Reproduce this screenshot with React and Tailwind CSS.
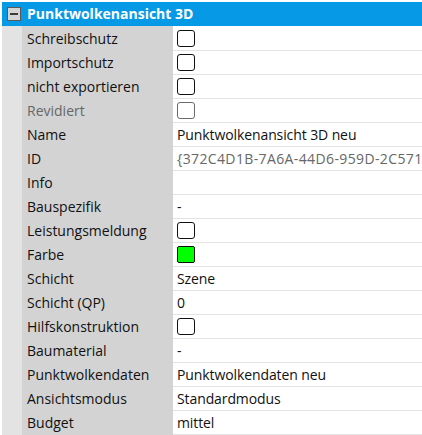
import React from "react";

const rows = [
  { label: "Schreibschutz", type: "check" },
  { label: "Importschutz", type: "check" },
  { label: "nicht exportieren", type: "check" },
  { label: "Revidiert", type: "check", muted: true },
  { label: "Name", value: "Punktwolkenansicht 3D neu" },
  { label: "ID", value: "{372C4D1B-7A6A-44D6-959D-2C571", grayValue: true },
  { label: "Info", value: "" },
  { label: "Bauspezifik", value: "-" },
  { label: "Leistungsmeldung", type: "check" },
  { label: "Farbe", type: "color" },
  { label: "Schicht", value: "Szene" },
  { label: "Schicht (QP)", value: "0" },
  { label: "Hilfskonstruktion", type: "check" },
  { label: "Baumaterial", value: "-" },
  { label: "Punktwolkendaten", value: "Punktwolkendaten neu" },
  { label: "Ansichtsmodus", value: "Standardmodus" },
  { label: "Budget", value: "mittel" },
];

const PropRow = ({ row, first }) => {
  return (
    <div className={`flex ${first ? "h-[25px]" : "h-[24px]"}`}>
      <div className="w-[20px] shrink-0 bg-[#e3e3e3]" />
      <div
        className={`w-[151px] shrink-0 bg-[#d3d3d3] pl-[5px] flex items-center whitespace-nowrap ${
          row.muted ? "text-[#676767]" : "text-[#111111]"
        }`}
      >
        {row.label}
      </div>
      <div className="flex-1 min-w-0 border-b border-[#e3e3e3] pl-[4px] flex items-center overflow-hidden whitespace-nowrap">
        {row.type === "check" && (
          <div
            className={`w-[18px] h-[17px] rounded-[3px] border-[1.5px] bg-white ${
              row.muted ? "border-[#6a6a6a]" : "border-[#111111]"
            }`}
          />
        )}
        {row.type === "color" && (
          <div className="w-[18px] h-[17px] rounded-[2px] border-[1.5px] border-[#111111] bg-[#00ff00]" />
        )}
        {row.value !== undefined && (
          <span
            className={
              row.grayValue
                ? "tracking-[0.38px] text-[#676767]"
                : "tracking-[-0.1px] text-[#111111]"
            }
          >
            {row.value}
          </span>
        )}
      </div>
    </div>
  );
};

const App = () => {
  return (
    <div
      className="w-[422px] h-[435px] bg-white pt-[2px] pl-[2px] overflow-hidden text-[14px] leading-none"
      style={{ fontFamily: '"Open Sans", "Noto Sans", sans-serif' }}
    >
      {/* Group header */}
      <div className="h-[24px] bg-[#0599e6] flex items-center">
        <div className="ml-[5px] w-[14px] h-[14px] bg-[#d4d4d4] border border-[#5a5a5a] flex items-center justify-center">
          <div className="w-[8px] h-[2px] bg-[#3c3c3c]" />
        </div>
        <span className="ml-[6px] text-white font-bold text-[14px]">
          Punktwolkenansicht 3D
        </span>
      </div>

      {rows.map((row, i) => (
        <PropRow key={row.label} row={row} first={i === 0} />
      ))}
    </div>
  );
};

export default App;
